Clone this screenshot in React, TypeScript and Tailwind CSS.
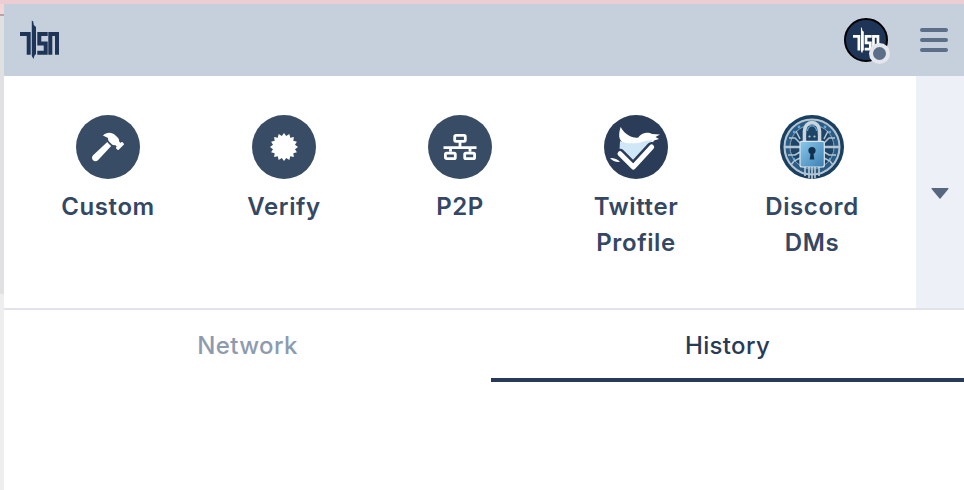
import type { ReactNode } from "react";
import { FaHammer } from "react-icons/fa";

function Logo({ color = "#1f3557", size = 40 }: { color?: string; size?: number }) {
  return (
    <svg width={size} height={size} viewBox="0 0 40 40" fill={color} aria-hidden="true">
      {/* 7 */}
      <path d="M0 12h10.700v22.700h-4V16H0z" />
      {/* blade */}
      <path d="M11.800 0.500 13.200 1.500 13.800 5 16 7v27l-1.500 1.500-1 3.500-1.700-3z" />
      {/* S */}
      <path d="M17.300 12h10.400v4h-6.400v5.500h6.400v13.200H17.300v-4h6.400v-5.200h-6.400z" />
      {/* N */}
      <path d="M28.300 12H39v22.700h-4V16h-2.700v18.700h-4z" />
    </svg>
  );
}

function HammerIcon() {
  return <FaHammer className="w-8 h-8 text-white" aria-hidden="true" />;
}

// 16 point seal, points worked out once at load
const SEAL_POINTS = Array.from({ length: 32 }, (_, i) => {
  const r = i % 2 === 0 ? 14 : 11.200;
  const a = (i * Math.PI) / 16;
  return `${(14 + r * Math.sin(a)).toFixed(2)},${(14 - r * Math.cos(a)).toFixed(2)}`;
}).join(" ");

function VerifyIcon() {
  return (
    <svg width="28" height="28" viewBox="0 0 28 28" fill="white" aria-hidden="true">
      <polygon points={SEAL_POINTS} />
    </svg>
  );
}

function NetworkIcon() {
  return (
    <svg width="34" height="34" viewBox="0 0 34 34" fill="none" stroke="white" strokeWidth="2.800" aria-hidden="true">
      <rect x="11.700" y="5.400" width="10.600" height="5.900" rx="1.200" />
      <path d="M17 12v5.700M0.500 17.700h33M7.500 17.700v4M27 17.700v4" />
      <rect x="2.400" y="23.100" width="9.900" height="5.500" rx="1.200" />
      <rect x="21.700" y="23.100" width="9.900" height="5.500" rx="1.200" />
    </svg>
  );
}

function TwitterIcon() {
  return (
    <svg width="64" height="64" viewBox="0 0 64 64" aria-hidden="true">
      <circle cx="32" cy="32" r="32" fill="#2a3c57" />
      {/* wing and head */}
      <path d="M16.700 12c2 4 5 7 9 9 3 1.500 6 2 8.500 1.500 2-2.500 4-4 7-4.500 2.500-.5 5 .2 7 1l7.800.5-4.500 2.500 3.500 2-5 1.500c-1 2-2 3-3 4L22 30c-4-2-6.500-5-6.800-8.500-.2-3.500.5-6.500 1.500-9.500z" fill="#ffffff" />
      {/* body */}
      <path d="M16 26c5 2.500 13 3 20 1.500 4-1 8-2.500 11.700-2.200l2.800 4L30 50 15.500 35z" fill="#cfe7f7" />
      {/* check */}
      <path d="M16 38.700l13.300 13.300 18.400-20" fill="none" stroke="#2a3c57" strokeWidth="10" strokeLinecap="round" strokeLinejoin="round" />
      <path d="M16 38.700l13.300 13.300 18.400-20" fill="none" stroke="#ffffff" strokeWidth="5" strokeLinecap="round" strokeLinejoin="round" />
      <path d="M6 43c4.500 0 8 1.500 10 4-4 .5-7.500-1-10-4z" fill="#ffffff" />
    </svg>
  );
}

function LockIcon() {
  return (
    <svg width="64" height="64" viewBox="0 0 64 64" fill="none" aria-hidden="true">
      <defs>
        <linearGradient id="lockBody" x1="0" y1="0" x2="1" y2="1">
          <stop offset="0" stopColor="#8cc8ec" />
          <stop offset="1" stopColor="#3a7fb2" />
        </linearGradient>
      </defs>
      <circle cx="32" cy="32" r="32" fill="#1a3f60" />
      <circle cx="32" cy="32" r="27.500" fill="#2c5c84" stroke="#b4c6d3" strokeWidth="2" />
      <circle cx="32" cy="32" r="22" fill="#1e4568" stroke="#8fa9bd" strokeWidth="1" />
      <path d="M5 32h15M44 32h15" stroke="#b4c6d3" strokeWidth="2.400" />
      <path d="M20 28l-5-5H9M20 24l-4-8M44 28l5-5h6M44 24l4-8M20 37l-5 3H8M20 43l-6 3-3 4M44 37l5 3h7M44 43l6 3 3 4" stroke="#b4c6d3" strokeWidth="1.500" />
      <path d="M25 52v9M29 52v11M32 52v12M35 52v11M39 52v9" stroke="#b4c6d3" strokeWidth="1.700" />
      <circle cx="19" cy="12" r="1.400" fill="#62a8d8" />
      <circle cx="14" cy="17" r="1.200" fill="#62a8d8" />
      <circle cx="45" cy="12" r="1.400" fill="#62a8d8" />
      <circle cx="50" cy="17" r="1.200" fill="#62a8d8" />
      <circle cx="14" cy="44" r="1.200" fill="#62a8d8" />
      <circle cx="50" cy="44" r="1.200" fill="#62a8d8" />
      <path d="M24.500 27v-11a7.500 8.500 0 0 1 15 0v11" stroke="#c9d6df" strokeWidth="3.600" />
      <path d="M27.500 16a4.500 5 0 0 1 9 0" stroke="#62a8d8" strokeWidth="1.200" />
      <rect x="26.500" y="18" width="11" height="8" rx="1.500" fill="#1e4568" />
      <circle cx="29.500" cy="21.500" r="1.100" fill="#a9c0d2" />
      <circle cx="34.500" cy="21.500" r="1.100" fill="#a9c0d2" />
      <rect x="20" y="26.300" width="24.300" height="25.700" rx="2" fill="url(#lockBody)" stroke="#dbe6ee" strokeWidth="1.200" />
      <circle cx="32" cy="35.500" r="3.600" fill="#12304d" />
      <path d="M30.700 37h2.600l1 7.500h-4.600z" fill="#12304d" />
    </svg>
  );
}

type Action = {
  label: ReactNode;
  icon: ReactNode;
  plain?: boolean;
};

const ACTIONS: Action[] = [
  { label: "Custom", icon: <HammerIcon /> },
  { label: "Verify", icon: <VerifyIcon /> },
  { label: "P2P", icon: <NetworkIcon /> },
  { label: <>Twitter<br />Profile</>, icon: <TwitterIcon />, plain: true },
  { label: <>Discord<br />DMs</>, icon: <LockIcon />, plain: true },
];

function ActionItem({ label, icon, plain }: Action) {
  return (
    <div className="flex flex-col items-center pt-[39px]">
      {plain ? (
        <div className="w-16 h-16">{icon}</div>
      ) : (
        <div className="w-16 h-16 rounded-full bg-[#384c66] flex items-center justify-center">{icon}</div>
      )}
      <p className="mt-[10px] text-center text-[24px] leading-[36px] font-semibold tracking-[0.6px] text-[#344763]">
        {label}
      </p>
    </div>
  );
}

export default function App() {
  return (
    <div className="w-[964px] h-[490px] overflow-hidden bg-white flex flex-col font-['Inter',sans-serif]">
      <div className="h-1 shrink-0 bg-[#eccdd1]" />
      <div className="flex-1 flex min-h-0">
        {/* sliver of the window behind the popup */}
        <div className="w-1 shrink-0 flex flex-col">
          <div className="h-[10px] bg-[#f3d6da]" />
          <div className="h-[2px] bg-[#b9a3a8]" />
          <div className="h-[278px] bg-[#e0e0e2]" />
          <div className="flex-1 bg-[#eeeeef]" />
        </div>
        <div className="flex-1 min-w-0 bg-white flex flex-col">
          <header className="h-[72px] shrink-0 bg-[#c5d0dc] flex items-center justify-between pl-4 pr-4">
            <Logo />
            <div className="flex items-center gap-[32px]">
              <div className="relative w-11 h-11 rounded-full bg-[#1f3557] border-2 border-black flex items-center justify-center">
                <Logo color="#ffffff" size={27} />
                <span className="absolute -right-[4px] -bottom-[4px] w-[21px] h-[21px] rounded-full bg-[#5d6f88] border-[4px] border-[#e4e6ec]" />
              </div>
              <div className="w-7 flex flex-col gap-[6px]">
                <span className="h-1 rounded-full bg-[#5d6f88]" />
                <span className="h-1 rounded-full bg-[#5d6f88]" />
                <span className="h-1 rounded-full bg-[#5d6f88]" />
              </div>
            </div>
          </header>

          <div className="h-[232px] shrink-0 flex">
            <div className="flex-1 grid grid-cols-5 px-4">
              {ACTIONS.map((action, i) => (
                <ActionItem key={i} {...action} />
              ))}
            </div>
            <div className="w-12 bg-[#edf0f6] flex justify-center pt-[112px]">
              <svg width="18" height="11" viewBox="0 0 18 11" fill="#56677f" aria-hidden="true">
                <path d="M1 0h16q1 0 .4 1L9.500 10.500q-.5.500-1 0L.6 1Q0 0 1 0z" />
              </svg>
            </div>
          </div>

          <div className="h-[2px] shrink-0 bg-[#e2e3e8]" />

          <div className="flex h-[72px] shrink-0 text-[24px] font-medium tracking-[0.35px]">
            <div className="w-[487px] flex items-center justify-center text-[#8e9bae]">Network</div>
            <div className="flex-1 flex items-center justify-center pt-1 text-[#273b59] border-b-4 border-[#273b59]">
              History
            </div>
          </div>
          <div className="flex-1" />
        </div>
      </div>
    </div>
  );
}
